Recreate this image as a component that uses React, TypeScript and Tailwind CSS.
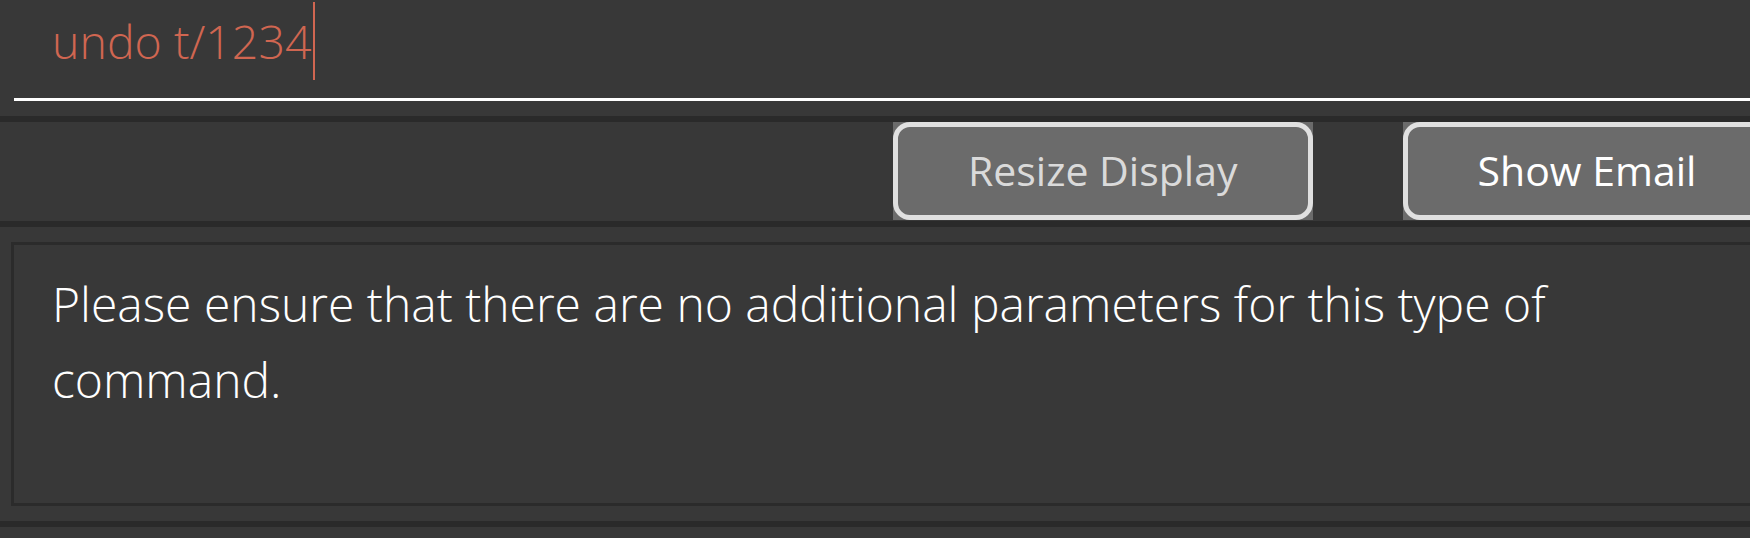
export default function App() {
    return (
        <div className="h-[538px] w-[1750px] overflow-hidden bg-[#383838]" style={{ fontFamily: '"Open Sans", "Noto Sans", sans-serif' }}>
            {/* command box */}
            <div className="h-[116px] pl-[14px]">
                <div className="flex h-[98px] items-start pl-[38px]">
                    <div className="mt-[2px] flex h-[78px] items-stretch">
                        <span className="text-[46.5px] font-light leading-[78px] text-[#d06651]">undo t/1234</span>
                        <span className="ml-[1px] w-[2px] bg-[#d06651]"></span>
                    </div>
                </div>
                <div className="h-[3px] bg-white"></div>
            </div>
            <div className="h-[6px] bg-[#2a2a2a]"></div>

            {/* buttons */}
            <div className="flex h-[99px] items-start gap-[90px] pl-[893px]">
                <Button label="Resize Display" textColor="text-[#dadada]" />
                <Button label="Show Email" textColor="text-white" />
            </div>
            <div className="h-[6px] bg-[#2a2a2a]"></div>

            {/* result display */}
            <div className="h-[294px] pl-[11px] pt-[15px]">
                <div className="h-[264px] w-[1780px] border-[3px] border-[#2b2b2b] pl-[38px] pt-[21px]">
                    <p className="text-[48px] font-light leading-[76px] text-white">
                        Please ensure that there are no additional parameters for this type of
                        <br />
                        command.
                    </p>
                </div>
            </div>
            <div className="h-[6px] bg-[#2a2a2a]"></div>
        </div>
    );
}

function Button({ label, textColor }: { label: string; textColor: string }) {
    return (
        <div className="h-[98px] shrink-0 bg-[#6b6b6b]">
            <div className={`flex h-full items-center rounded-[17px] border-[5px] border-[#e0e0e0] px-[70px] text-[41px] ${textColor}`}>
                {label}
            </div>
        </div>
    );
}
